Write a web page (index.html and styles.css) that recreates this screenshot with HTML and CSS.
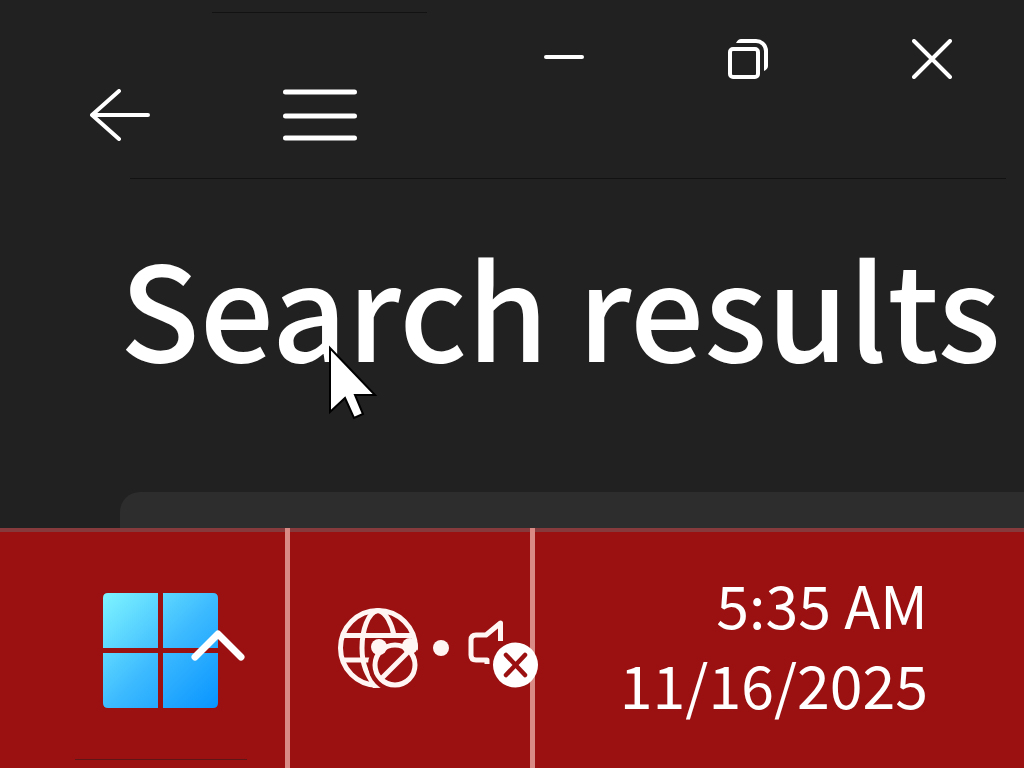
FILE: index.html
```html
<!DOCTYPE html>
<html lang="en">
<head>
    <meta charset="utf-8">
    <meta name="viewport" content="width=device-width, initial-scale=1">
    <title>Search results</title>
    <link rel="stylesheet" href="styles.css">
</head>
<body>

<div class="window">
    <div class="tab-edge"></div>
    <header class="titlebar">
        <nav class="nav-buttons">
            <button type="button" class="icon-btn" aria-label="Back">
                <svg width="60" height="52" viewBox="0 0 60 52">
                    <path d="M29 2 2 26 29 50M2 26H58"/>
                </svg>
            </button>
            <button type="button" class="icon-btn menu-btn" aria-label="Menu">
                <svg width="74" height="52" viewBox="0 0 74 52">
                    <path d="M2.500 3H71.500M2.500 27H71.500M2.500 49H71.500"/>
                </svg>
            </button>
        </nav>
        <div class="window-buttons">
            <button type="button" class="icon-btn" aria-label="Minimize">
                <svg width="40" height="40" viewBox="0 0 40 40"><path d="M2 18H38"/></svg>
            </button>
            <button type="button" class="icon-btn" aria-label="Restore">
                <svg width="40" height="40" viewBox="0 0 40 40">
                    <rect x="2" y="10" width="28" height="28" rx="3"/>
                    <path d="M8 4Q10 0 13 0H28A12 12 0 0 1 40 12V27Q40 30 36 32V12A8 8 0 0 0 28 4Z" fill="#fff" stroke="none"/>
                </svg>
            </button>
            <button type="button" class="icon-btn" aria-label="Close">
                <svg width="40" height="40" viewBox="0 0 40 40"><path d="M2 2 38 38M38 2 2 38"/></svg>
            </button>
        </div>
    </header>
    <div class="header-line"></div>

    <main class="content">
        <h1>Search results</h1>
        <svg class="pointer" width="50" height="76" viewBox="0 0 50 76">
            <path d="M2 3V67L17 53 26 73 35 69 27 50H47Z" fill="#fff" stroke="#000" stroke-width="2"/>
        </svg>
        <div class="panel"></div>
    </main>
</div>

<footer class="taskbar">
    <div class="start-area">
        <button type="button" class="task-btn start-btn" aria-label="Start">
            <svg width="115" height="115" viewBox="0 0 115 115">
                <defs>
                    <linearGradient id="win" gradientUnits="userSpaceOnUse" x1="0" y1="0" x2="115" y2="115">
                        <stop offset="0" stop-color="#7ff5ff"/>
                        <stop offset="0.5" stop-color="#3fbcff"/>
                        <stop offset="1" stop-color="#0894ff"/>
                    </linearGradient>
                </defs>
                <path fill="url(#win)" d="M5 0H55V55H0V5Q0 0 5 0ZM60 0H110Q115 0 115 5V55H60ZM0 60H55V115H5Q0 115 0 110ZM60 60H115V110Q115 115 110 115H60Z"/>
            </svg>
        </button>
        <button type="button" class="task-btn overflow-btn" aria-label="Show hidden icons">
            <svg width="54" height="32" viewBox="0 0 54 32">
                <path d="M4 27 27 4 50 27" fill="none" stroke="#fff" stroke-width="7" stroke-linecap="round" stroke-linejoin="round"/>
            </svg>
        </button>
        <div class="start-line"></div>
    </div>

    <div class="tray">
        <button type="button" class="task-btn network-btn" aria-label="No internet">
            <svg width="80" height="80" viewBox="0 0 80 80" fill="none" stroke="#fff6f4" stroke-width="5">
                <mask id="cut" maskUnits="userSpaceOnUse" x="0" y="0" width="80" height="80">
                    <rect width="80" height="80" fill="#fff" stroke="none"/>
                    <circle cx="57" cy="57" r="27" fill="#000" stroke="none"/>
                </mask>
                <g mask="url(#cut)">
                    <circle cx="40" cy="40" r="37.500"/>
                    <path d="M40 2.500C30 4 24 22 24 40S29 66 38 80M40 2.500C48 4 54 16 56 28M5 27.500H75M4 52H40"/>
                </g>
                <g class="solid">
                    <circle cx="41" cy="39" r="8"/>
                    <circle cx="72" cy="38" r="8"/>
                </g>
                <circle cx="57" cy="57" r="20"/>
                <path d="M43 71 73 41"/>
            </svg>
        </button>
        <span class="dot"></span>
        <button type="button" class="task-btn volume-btn" aria-label="Muted">
            <svg width="70" height="70" viewBox="0 0 70 70" fill="none">
                <path d="M32.500 22V4L18 16H8Q3 16 3 21V36Q3 41 8 41H19V45" stroke="#fff6f4" stroke-width="5" stroke-linejoin="round"/>
                <circle cx="47.500" cy="46" r="22.500" fill="#fff"/>
                <path d="M38 36 57 56M57 36 38 56" stroke="#9b1010" stroke-width="4.500" stroke-linecap="round"/>
            </svg>
        </button>
    </div>

    <button type="button" class="task-btn clock">
        <time>5:35 AM</time>
        <time>11/16/2025</time>
    </button>
</footer>

</body>
</html>
```
FILE: styles.css
```css
* {
    box-sizing: border-box;
}

body {
    margin: 0;
    min-height: 100vh;
    display: flex;
    flex-direction: column;
    background: #212121;
    color: #fff;
    font-family: "Noto Sans CJK SC", "Noto Sans", sans-serif;
    overflow-x: hidden;
}

button {
    display: block;
    margin: 0;
    padding: 0;
    border: none;
    background: none;
    color: inherit;
    font: inherit;
}

svg {
    display: block;
}

.window {
    flex: 1;
    display: flex;
    flex-direction: column;
}

.tab-edge {
    width: 21%;
    height: 1px;
    margin: 12px 0 0 212px;
    background: #121212;
}

.titlebar {
    display: flex;
    justify-content: space-between;
    align-items: flex-start;
    height: 165px;
    padding: 26px 72px 0 90px;
}

.nav-buttons {
    display: flex;
    gap: 133px;
    padding-top: 50px;
}

.window-buttons {
    display: flex;
    gap: 144px;
}

.icon-btn svg {
    fill: none;
    stroke: #fff;
    stroke-width: 4;
    stroke-linecap: round;
    stroke-linejoin: round;
}

.menu-btn svg {
    stroke-width: 5;
}

.header-line {
    height: 1px;
    margin: 0 18px 0 130px;
    background: #121212;
}

.content {
    flex: 1;
    display: flex;
    flex-direction: column;
    position: relative;
}

h1 {
    margin: 46px 0 0 120px;
    font-size: 131px;
    font-weight: 500;
    line-height: 160px;
    white-space: nowrap;
}

/* mouse pointer, drawn over the heading */
.pointer {
    position: absolute;
    top: 166px;
    left: 328px;
}

.panel {
    flex: 1;
    margin: 107px 0 0 120px;
    background: #2d2d2d;
    border-top-left-radius: 20px;
}

.taskbar {
    display: flex;
    height: 240px;
    background: linear-gradient(#873a3b 4px, #9b1010 4px);
}

.start-area,
.tray {
    flex-shrink: 0;
    border-right: 5px solid #d98a84;
}

.start-area {
    position: relative;
    width: 290px;
    padding: 65px 0 0 103px;
}

.overflow-btn {
    position: absolute;
    top: 102px;
    left: 191px;
}

.start-line {
    width: 172px;
    height: 1px;
    margin: 51px 0 0 -28px;
    background: #5f1616;
}

.tray {
    display: flex;
    align-items: center;
    width: 245px;
    padding-left: 48px;
}

.tray > * {
    flex-shrink: 0;
}

.solid {
    fill: #fff6f4;
    stroke: none;
}

.dot {
    width: 16px;
    height: 16px;
    margin: 0 19px 0 15px;
    border-radius: 50%;
    background: #fff6f4;
}

.volume-btn {
    padding-top: 12px;
}

.clock {
    flex: 1;
    display: flex;
    flex-direction: column;
    justify-content: center;
    padding: 0 96px 8px 0;
    font-size: 59px;
    line-height: 80px;
    text-align: right;
}
```
